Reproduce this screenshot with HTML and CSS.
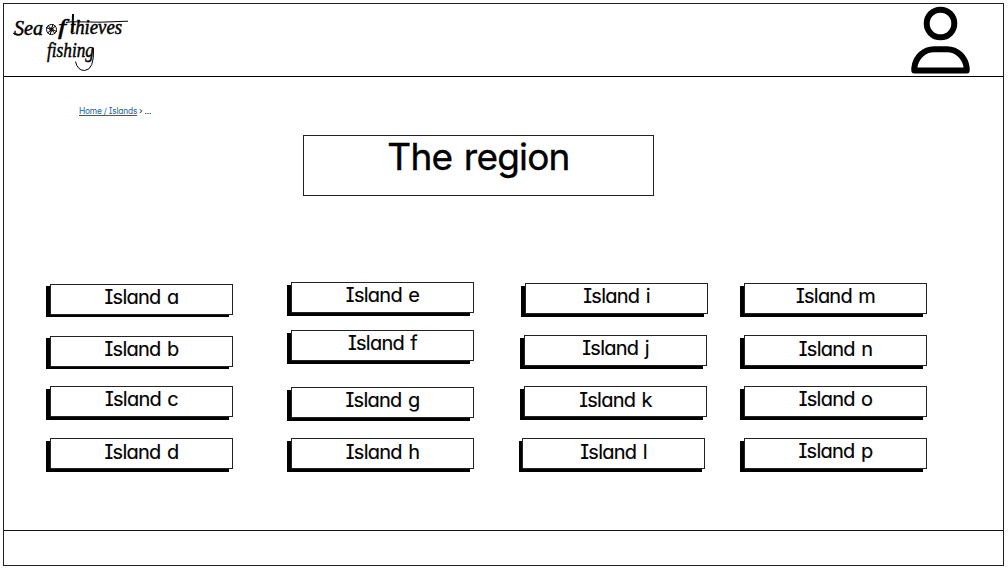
FILE: index.html
```
<!DOCTYPE html>
<html lang="en">
<head>
<meta charset="utf-8">
<title>Sea of thieves fishing</title>
<link rel="stylesheet" href="styles.css">
</head>
<body>
<div class="page">
  <header class="header">
    <svg class="logo" width="124" height="68" viewBox="0 0 124 68">
      <g class="logo-text">
        <text x="9" y="31" textLength="29" lengthAdjust="spacingAndGlyphs">Sea</text>
        <text x="53" y="30" textLength="8" lengthAdjust="spacingAndGlyphs">f</text>
        <text x="65" y="30" textLength="52" lengthAdjust="spacingAndGlyphs">thieves</text>
        <text x="42" y="53" textLength="47" lengthAdjust="spacingAndGlyphs" class="second">fishing</text>
      </g>
      <g class="logo-lines">
        <circle cx="46.500" cy="25.500" r="5"/>
        <circle cx="46.500" cy="25.500" r="1.600"/>
        <path d="M41 23.500l11 4M45 31l3-11M42.500 29l8-7M43 21.500l7 8"/>
        <path d="M61 18.500l6-.800 28 .500 28-1"/>
        <path d="M8 29q5 4 9 1"/>
        <path d="M68 10l-.500 18" class="thick"/>
        <path d="M88.500 44q1 22-9 22.500-7 0-9-9"/>
      </g>
    </svg>
    <svg class="user" width="60" height="72" viewBox="0 0 60 72">
      <circle cx="30.500" cy="19.500" r="13.800"/>
      <path d="M4.300 66.500V64C5.500 53 14 45.300 24 45.300h13C47 45.300 55.500 53 56.700 64v2.500z"/>
    </svg>
  </header>
  <main class="main">
    <nav class="crumbs"><a href="#">Home / Islands</a> › ...</nav>
    <h1 class="title">The region</h1>
    <div class="islands">
      <div class="col c1">
        <a class="island">Island a</a><a class="island">Island b</a><a class="island">Island c</a><a class="island">Island d</a>
      </div>
      <div class="col c2">
        <a class="island">Island e</a><a class="island">Island f</a><a class="island">Island g</a><a class="island">Island h</a>
      </div>
      <div class="col c3">
        <a class="island">Island i</a><a class="island">Island j</a><a class="island">Island k</a><a class="island">Island l</a>
      </div>
      <div class="col c4">
        <a class="island">Island m</a><a class="island">Island n</a><a class="island">Island o</a><a class="island">Island p</a>
      </div>
    </div>
  </main>
  <footer class="footer"></footer>
</div>
</body>
</html>
```
FILE: styles.css
```
* { box-sizing: border-box; }
body {
  margin: 0;
  padding: 3px;
  background: #fff;
  color: #000;
  font-family: Inter, "Open Sans", sans-serif;
  font-feature-settings: "cv11", "cv08";
}
.page {
  display: flex;
  flex-direction: column;
  width: 1001px;
  height: 563px;
  border: 1px solid #222;
}
.header {
  display: flex;
  justify-content: space-between;
  height: 73px;
  padding: 0 33px 0 1px;
  border-bottom: 1px solid #000;
}
.logo { overflow: visible; }
.logo-text { font-family: "Liberation Serif", serif; font-style: italic; font-size: 20px; stroke: #000; stroke-width: .5; }
.logo-text .second { font-size: 22px; }
.logo-lines { fill: none; stroke: #000; stroke-width: 1; }
.logo-lines .thick { stroke-width: 2; }
.user { fill: none; stroke: #000; stroke-width: 6; stroke-linejoin: round; }
.main { flex: 1; display: flex; flex-direction: column; }
.crumbs { height: 12px; margin: 28px 0 0 75px; font-size: 8.4px; line-height: 12px; letter-spacing: -.2px; white-space: nowrap; }
.crumbs a { color: #1565ad; text-decoration: underline; }
.title {
  width: 351px;
  height: 61px;
  margin: 18px 0 0 299px;
  border: 1px solid #222;
  font-size: 37px;
  font-weight: 400;
  line-height: 41px;
  letter-spacing: -.8px;
  word-spacing: 2px;
  text-align: center;
  -webkit-text-stroke: .4px #000;
}
.islands { display: flex; align-items: flex-start; margin: 86px 0 0 46px; }
.col { display: flex; flex-direction: column; gap: 21px; width: 183px; }
.c1 { padding-top: 2px; }
.c2 { margin-left: 58px; }
.c3 { margin-left: 50px; padding-top: 1px; }
.c4 { margin-left: 37px; padding-top: 1px; }
.island {
  height: 31px;
  border: 1px solid #222;
  background: #fff;
  box-shadow: -4px 3px 0 #000;
  font-size: 20px;
  line-height: 25px;
  letter-spacing: -.75px;
  word-spacing: 1.5px;
  text-align: center;
  -webkit-text-stroke: .15px #000;
}
.c1 .island { box-shadow: -4px 2px 0 #000; }
.c1 .island:nth-child(3) { margin-top: -2px; box-shadow: -4px 3px 0 #000; }
.c1 .island:nth-child(4) { margin-top: 0; box-shadow: -4px 3px 0 #000; line-height: 27px; }
.c3 .island:nth-child(3), .c4 .island:nth-child(3) { margin-top: -1px; }
.c2 .island:nth-child(2) { margin-top: -4px; }
.c2 .island:nth-child(3) { margin-top: 5px; }
.c2 .island:nth-child(4) { margin-top: -1px; line-height: 27px; }
.c3 .island:nth-child(1) { margin-right: -1px; margin-left: 1px; }
.c3 .island:nth-child(4) { margin-left: -2px; margin-right: 2px; box-shadow: -3px 3px 0 #000; line-height: 27px; }
.c3 .island:nth-child(3) { line-height: 27px; }
.c4 .island:nth-child(2) { line-height: 27px; }
.footer { height: 35px; border-top: 1px solid #111; }
```
